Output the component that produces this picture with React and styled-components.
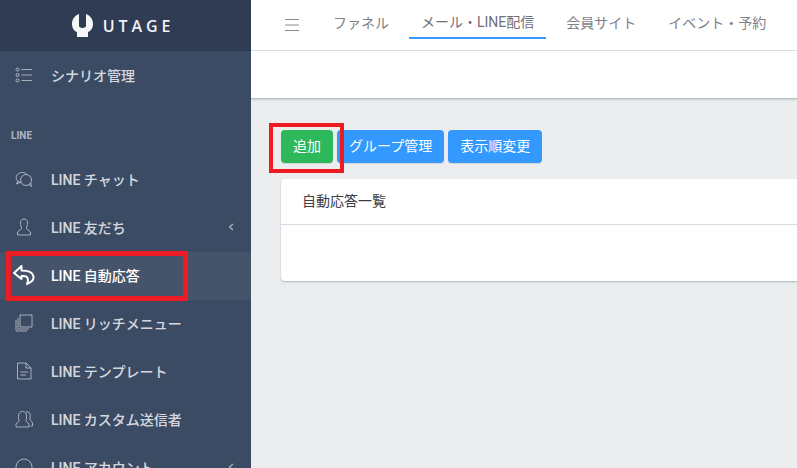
import styled, { createGlobalStyle } from 'styled-components';

const GlobalStyle = createGlobalStyle`
	html, body {
		margin: 0;
		height: 100%;
		overflow: hidden;
		background: #ebedef;
	}
	body {
		font-family: Roboto, "Noto Sans CJK JP", sans-serif;
		font-size: 14px;
	}
	#root {
		height: 100%;
	}
`;

const Layout = styled.div`
	display: flex;
	width: 797px;
	height: 468px;
	position: relative;
	overflow: hidden;
`;

const Sidebar = styled.aside`
	width: 251px;
	flex: none;
	background: #3c4b64;
	display: flex;
	flex-direction: column;
	overflow: hidden;
`;

const Brand = styled.div`
	height: 51px;
	flex: none;
	background: #303c54;
	display: flex;
	align-items: center;
	justify-content: center;
	gap: 10px;
	padding-right: 5px;
	box-sizing: border-box;
`;

const BrandName = styled.span`
	color: #f2f3f5;
	font-family: "Open Sans", sans-serif;
	font-size: 16px;
	font-weight: 600;
	letter-spacing: 3.9px;
`;

const NavItem = styled.div`
	height: 48px;
	flex: none;
	box-sizing: border-box;
	display: flex;
	align-items: center;
	padding: 0 16px ${(props) => (props.$flat ? 0 : 2)}px 15px;
	color: ${(props) => (props.$active ? '#fff' : 'rgba(255,255,255,0.8)')};
	background: ${(props) => (props.$active ? 'rgba(255,255,255,0.05)' : 'transparent')};
	font-weight: 500;
`;

const NavIcon = styled.svg`
	width: ${(props) => (props.$active ? 22 : 18)}px;
	height: ${(props) => (props.$active ? 22 : 18)}px;
	flex: none;
	margin-left: ${(props) => (props.$active ? -2 : 0)}px;
	margin-right: ${(props) => (props.$active ? 16 : 18)}px;
	fill: none;
	stroke: ${(props) => (props.$active ? '#fff' : 'rgba(255,255,255,0.55)')};
	stroke-width: ${(props) => (props.$active ? 2 : 1)};
	stroke-linejoin: round;
`;

const NavLabel = styled.span`
	flex: 1;
	white-space: nowrap;
`;

const Caret = styled.svg`
	width: 6px;
	height: 8px;
	flex: none;
	margin-right: 1px;
	fill: none;
	stroke: rgba(255,255,255,0.6);
	stroke-width: 1.2;
`;

const NavTitle = styled.div`
	height: 24px;
	flex: none;
	margin-top: 24px;
	margin-bottom: 9px;
	padding-left: 11px;
	display: flex;
	align-items: center;
	color: rgba(255,255,255,0.6);
	font-size: 10px;
	font-weight: 700;
`;

const Main = styled.div`
	flex: 1;
	min-width: 0;
	display: flex;
	flex-direction: column;
`;

const Header = styled.header`
	background: #fff;
	height: 99px;
	flex: none;
	box-sizing: border-box;
	border-bottom: 1px solid #b4bdc4;
	box-shadow: 0 1px 2px rgba(60, 75, 100, 0.18);
`;

const TopBar = styled.div`
	height: 51px;
	box-sizing: border-box;
	border-bottom: 1px solid #d8dbe0;
	display: flex;
	align-items: center;
	padding-left: 34px;
`;

const Burger = styled.svg`
	width: 14px;
	height: 14px;
	flex: none;
	margin-right: 22px;
	stroke: #8a8a90;
	stroke-width: 1;
`;

const Tab = styled.div`
	height: 30px;
	margin-top: -2px;
	box-sizing: border-box;
	padding: 0 12px ${(props) => (props.$active ? 4 : 2)}px;
	margin-right: ${(props) => props.$gap}px;
	display: flex;
	align-items: center;
	white-space: nowrap;
	color: ${(props) => (props.$active ? '#6f6f78' : '#808088')};
	border-bottom: 2px solid ${(props) => (props.$active ? '#39f' : 'transparent')};
`;

const Content = styled.main`
	padding: 31px 0 0 30px;
`;

const ButtonRow = styled.div`
	display: flex;
	gap: 4px;
	margin-bottom: 16px;
`;

const Button = styled.button`
	height: 33px;
	padding: 0 12px 3px;
	border: 0;
	border-radius: 4px;
	color: #fff;
	font-family: inherit;
	font-size: 14px;
	background: ${(props) => (props.$variant === 'green' ? '#2eb85c' : '#39f')};
	box-shadow: 0 1px 1px rgba(0, 0, 21, 0.12);
`;

const Card = styled.section`
	width: 560px;
	height: 102px;
	background: #fff;
	border-radius: 4px;
	box-shadow: 0 1px 2px rgba(60, 75, 100, 0.35);
`;

const CardHeader = styled.div`
	height: 46px;
	box-sizing: border-box;
	border-bottom: 1px solid #d8dbe0;
	padding: 0 0 3px 21px;
	display: flex;
	align-items: center;
	color: #3c3c44;
`;

const Highlight = styled.div`
	position: absolute;
	box-sizing: border-box;
	border: ${(props) => props.$w}px solid #ed1c24;
	left: ${(props) => props.$x}px;
	top: ${(props) => props.$y}px;
	width: ${(props) => props.$width}px;
	height: ${(props) => props.$height}px;
`;

const Logo = () => (
	<svg width="21" height="23" viewBox="0 0 21 23">
		<path
			fill="#f5f6f7"
			d="M7 0 C2 2 0 6 0 10 C0 14 2 17 5 18 V23 H16 V18 C19 17 21 14 21 10 C21 6 19 2 14 0 V12 C14 14.5 7 14.5 7 12 Z"
		/>
	</svg>
);

const icons = {
	list: (
		<>
			<circle cx="2.5" cy="3.5" r="1.5" />
			<circle cx="2.5" cy="9" r="1.5" />
			<circle cx="2.5" cy="14.5" r="1.5" />
			<path d="M6.5 3.5H17M6.5 9H17M6.5 14.5H17" />
		</>
	),
	chat: (
		<>
			<path d="M6 12.5 C1.5 11.5 0 8 2 5 C4 2 9 1.5 11.5 4" />
			<path d="M3 11 L1.5 14 L5 12.5" />
			<circle cx="11" cy="10" r="5.5" />
			<path d="M14 14.5 L16.5 16.5 L15.8 13" />
		</>
	),
	user: (
		<path d="M6.5 9.5 C4.5 5 5.5 1 9 1 C12.5 1 13.5 5 11.5 9.5 C11 11.5 14 12.5 15.5 14 L15.5 17 L2.5 17 L2.5 14 C4 12.5 7 11.5 6.5 9.5 Z" />
	),
	reply: <path d="M8.5 2 L1 9 L8.5 15 L8.5 12 C13 11.5 15 13 15 16 C15 18 14.5 19 14 20 C18 18.5 21 16 20.5 12.5 C20 8.5 15 6.5 8.5 6.5 Z" />,
	layers: (
		<>
			<rect x="5" y="1" width="12" height="12" />
			<path d="M3 4 V15 H14 M1 6 V17 H12" />
		</>
	),
	file: (
		<>
			<path d="M2.5 1 H11 L16 6 V17 H2.5 Z M11 1 V6 H16" />
			<path d="M5.5 10 H13 M5.5 13 H11" />
		</>
	),
	users: (
		<>
			<path d="M4 10 C2.5 5 4 1.5 7.5 1.5 C11 1.5 12.5 5 11 10 C10.5 12 13 12.5 14 14 L14 17 L1 17 L1 14 C2 12.5 4.5 12 4 10 Z" />
			<path d="M11 2 C14 1 16 3.5 15 8 C14.5 10.5 17 11 17.5 13 L17.5 16 L15.5 16" />
		</>
	),
	account: <circle cx="9" cy="9" r="8" />,
};

const navAbove = { icon: 'list', label: 'シナリオ管理', flat: true };

const navItems = [
	{ icon: 'chat', label: 'LINE チャット' },
	{ icon: 'user', label: 'LINE 友だち', caret: true },
	{ icon: 'reply', label: 'LINE 自動応答', active: true },
	{ icon: 'layers', label: 'LINE リッチメニュー' },
	{ icon: 'file', label: 'LINE テンプレート' },
	{ icon: 'users', label: 'LINE カスタム送信者' },
	{ icon: 'account', label: 'LINE アカウント', caret: true },
];

const tabs = [
	{ label: 'ファネル', gap: 8 },
	{ label: 'メール・LINE配信', active: true, gap: 8 },
	{ label: '会員サイト', gap: 8 },
	{ label: 'イベント・予約', gap: 0 },
];

const SideItem = ({ item }) => (
	<NavItem $active={item.active} $flat={item.flat}>
		<NavIcon viewBox={item.active ? '0 0 22 22' : '0 0 18 18'} $active={item.active}>
			{icons[item.icon]}
		</NavIcon>
		<NavLabel>{item.label}</NavLabel>
		{item.caret && (
			<Caret viewBox="0 0 6 8">
				<path d="M5 1 L1.5 4 L5 7" />
			</Caret>
		)}
	</NavItem>
);

const App = () => (
	<Layout>
		<GlobalStyle />
		<Sidebar>
			<Brand>
				<Logo />
				<BrandName>UTAGE</BrandName>
			</Brand>
			<SideItem item={navAbove} />
			<NavTitle>LINE</NavTitle>
			{navItems.map((item) => (
				<SideItem key={item.label} item={item} />
			))}
		</Sidebar>
		<Main>
			<Header>
				<TopBar>
					<Burger viewBox="0 0 14 14">
						<path d="M0 1.5H14M0 7H14M0 12.5H14" />
					</Burger>
					{tabs.map((tab) => (
						<Tab key={tab.label} $active={tab.active} $gap={tab.gap}>
							{tab.label}
						</Tab>
					))}
				</TopBar>
			</Header>
			<Content>
				<ButtonRow>
					<Button $variant="green">追加</Button>
					<Button>グループ管理</Button>
					<Button>表示順変更</Button>
				</ButtonRow>
				<Card>
					<CardHeader>自動応答一覧</CardHeader>
				</Card>
			</Content>
		</Main>
		<Highlight $x={6} $y={251} $width={182} $height={50} $w={5} />
		<Highlight $x={269} $y={123} $width={75} $height={50} $w={4} />
	</Layout>
);

export default App;
